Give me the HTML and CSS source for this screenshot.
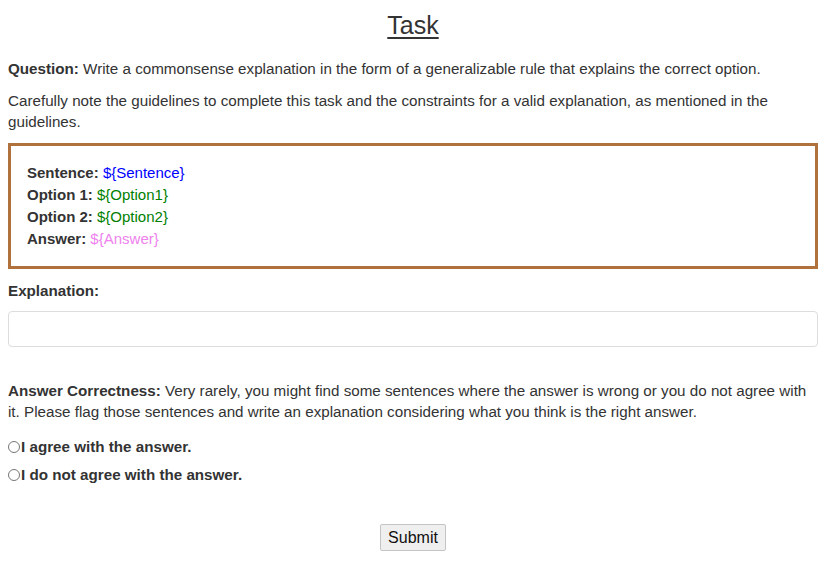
FILE: index.html
```html
<!DOCTYPE html>
<html lang="en">
<head>
  <meta charset="UTF-8" />
  <title>Task</title>
  <link rel="stylesheet" href="styles.css">
</head>
<body>
  <div class="page">
    <h1 class="title">Task</h1>

    <p class="intro"><b>Question:</b> Write a commonsense explanation in the form of a generalizable rule that explains the correct option.</p>
    <p class="intro">Carefully note the guidelines to complete this task and the constraints for a valid explanation, as mentioned in the guidelines.</p>

    <div class="sample">
      <div><b>Sentence:</b> <span class="v-sentence">${Sentence}</span></div>
      <div><b>Option 1:</b> <span class="v-option">${Option1}</span></div>
      <div><b>Option 2:</b> <span class="v-option">${Option2}</span></div>
      <div><b>Answer:</b> <span class="v-answer">${Answer}</span></div>
    </div>

    <label class="field-label" for="explanation">Explanation:</label>
    <input class="field-input" type="text" id="explanation" name="explanation">

    <p class="correctness"><b>Answer Correctness:</b> Very rarely, you might find some sentences where the answer is wrong or you do not agree with it. Please flag those sentences and write an explanation considering what you think is the right answer.</p>

    <div class="choices">
      <label class="choice"><input type="radio" name="agree" value="yes">I agree with the answer.</label>
      <label class="choice"><input type="radio" name="agree" value="no">I do not agree with the answer.</label>
    </div>

    <div class="actions">
      <button class="submit" type="submit">Submit</button>
    </div>
  </div>
</body>
</html>
```

FILE: styles.css
```css
* {
  box-sizing: border-box;
}
body {
  margin: 0;
  background: #fff;
  color: #333;
  font-family: 'Liberation Sans', Arial, sans-serif;
  font-size: 15.2px;
  line-height: 21px;
}
.page {
  padding: 12px 12px 0 8px;
}
.title {
  margin: 0 0 20px;
  font-size: 25px;
  font-weight: normal;
  line-height: 26px;
  text-align: center;
  text-decoration: underline;
  text-underline-offset: 3px;
}
.intro {
  margin: 0 0 11px;
}
.sample {
  border: 3px solid #b1713d;
  padding: 16px;
  font-size: 15px;
  line-height: 22px;
  margin-bottom: 11px;
}
.v-sentence {
  color: #0000ff;
}
.v-option {
  color: #008000;
}
.v-answer {
  color: #ee82ee;
}
.field-label {
  display: block;
  font-weight: bold;
  margin-bottom: 10px;
}
.field-input {
  display: block;
  width: 100%;
  height: 36px;
  border: 1px solid #ddd;
  border-radius: 4px;
  padding: 6px 12px;
  font: inherit;
  margin-bottom: 33px;
}
.correctness {
  margin: 0 0 14px;
}
.choices {
  display: flex;
  flex-direction: column;
  gap: 7px;
}
.choice {
  display: flex;
  align-items: center;
  font-weight: bold;
}
.choice input {
  margin: 0 1px 0 0;
  width: 12px;
  height: 12px;
}
.actions {
  text-align: center;
  padding-top: 39px;
}
.submit {
  font-family: 'Liberation Sans', Arial, sans-serif;
  font-size: 16px;
  color: #111;
  background: #efefef;
  border: 1px solid #c4c4c4;
  border-radius: 2px;
  padding: 3px 7px;
  height: 27px;
}
```
